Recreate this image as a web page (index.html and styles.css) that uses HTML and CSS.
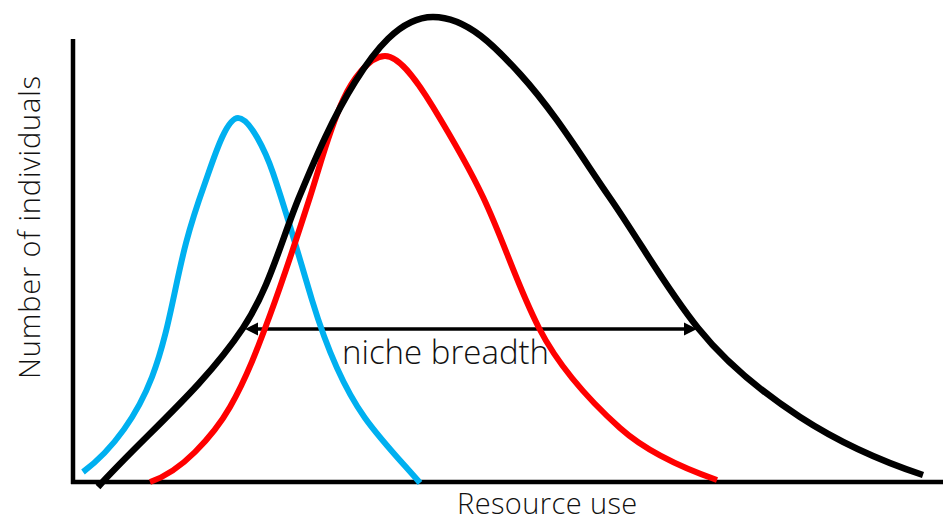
FILE: index.html
```html
<!DOCTYPE html>
<html lang="en">
<head>
<meta charset="utf-8">
<title>Niche breadth</title>
<link rel="stylesheet" href="styles.css">
</head>
<body>
<figure class="chart">
  <svg class="chart-svg" viewBox="0 0 943 522" width="943" height="522" xmlns="http://www.w3.org/2000/svg">
    <line class="axis" x1="73" y1="39" x2="73" y2="484"/>
    <line class="axis" x1="71" y1="482" x2="943" y2="482"/>
    <text class="label label-y" transform="translate(40 379) rotate(-90)">Number of individuals</text>
    <text class="label label-x" x="457" y="513.5">Resource use</text>
    <line class="arrow-line" x1="256" y1="329" x2="685" y2="329"/>
    <polygon class="arrow-head" points="245,329 258,322.5 258,335.5"/>
    <polygon class="arrow-head" points="697,329 684,322.5 684,335.5"/>
    <text class="label label-niche" x="342" y="364">niche breadth</text>
    <path class="curve curve-blue" d="M83,472 C114.2,448.6 138,413.4 152,377 C168.5,334.1 174.3,287.5 186,243 C191.3,222.7 197.9,202.8 205,183 C213.2,160.1 226,118 238,118 C250,118 265.9,152.5 273,173 C287.4,214.9 299.2,257.6 312,300 C324.5,341.2 340,382.9 365,418 C381.5,441.1 401.4,461.6 420,483"/>
    <path class="curve curve-red" d="M150,482 C167,476.1 182.3,464.7 195,452 C208.4,438.6 220.6,423.5 230,407 C246.6,378 258.4,346.3 270,315 C284.4,276.1 297.3,236.5 310,197 C320.5,164.4 328.8,131.1 343,100 C351.4,81.5 369,56 385,56 C401,56 420.9,87.1 433,107 C450.8,136.3 468.3,166 483,197 C503.4,239.9 517.3,285.7 539,328 C558.6,366.2 588.1,399.3 620,428 C647.3,452.5 682.4,467.9 717,480"/>
    <path class="curve curve-black" d="M98,487 C146.2,434 203.2,387.7 243,328 C269.8,287.9 281.4,239.5 300,195 C316.1,156.3 332.8,117.5 355,82 C372.9,53.3 399.2,17 433,17 C467.7,17 496.6,48.3 520,74 C554.3,111.7 581,156 610,198 C639.7,241 665.3,287.2 698,328 C726.2,363.2 762.2,392.4 800,417 C838,441.7 880,460.8 923,475"/>
  </svg>
</figure>
</body>
</html>
```

FILE: styles.css
```css
html, body {
  margin: 0;
  background: #ffffff;
}

.chart {
  margin: 0;
  width: 943px;
  height: 522px;
  overflow: hidden;
}

.chart-svg {
  display: block;
}

.axis {
  stroke: #000000;
  stroke-width: 4.5;
}

.label {
  font-family: "Open Sans", "Liberation Sans", sans-serif;
  font-size: 29px;
  font-weight: 300;
  fill: #111111;
}

.label-y {
  letter-spacing: 0.85px;
}

.label-x {
  letter-spacing: 0.4px;
}

.label-niche {
  font-size: 33px;
}

.arrow-line {
  stroke: #000000;
  stroke-width: 3.5;
}

.arrow-head {
  fill: #000000;
}

.curve {
  fill: none;
  stroke-width: 6;
  stroke-linecap: butt;
  stroke-linejoin: round;
}

.curve-blue {
  stroke: #00b0f0;
}

.curve-red {
  stroke: #ff0000;
}

.curve-black {
  stroke: #000000;
  stroke-width: 6.5;
}
```
